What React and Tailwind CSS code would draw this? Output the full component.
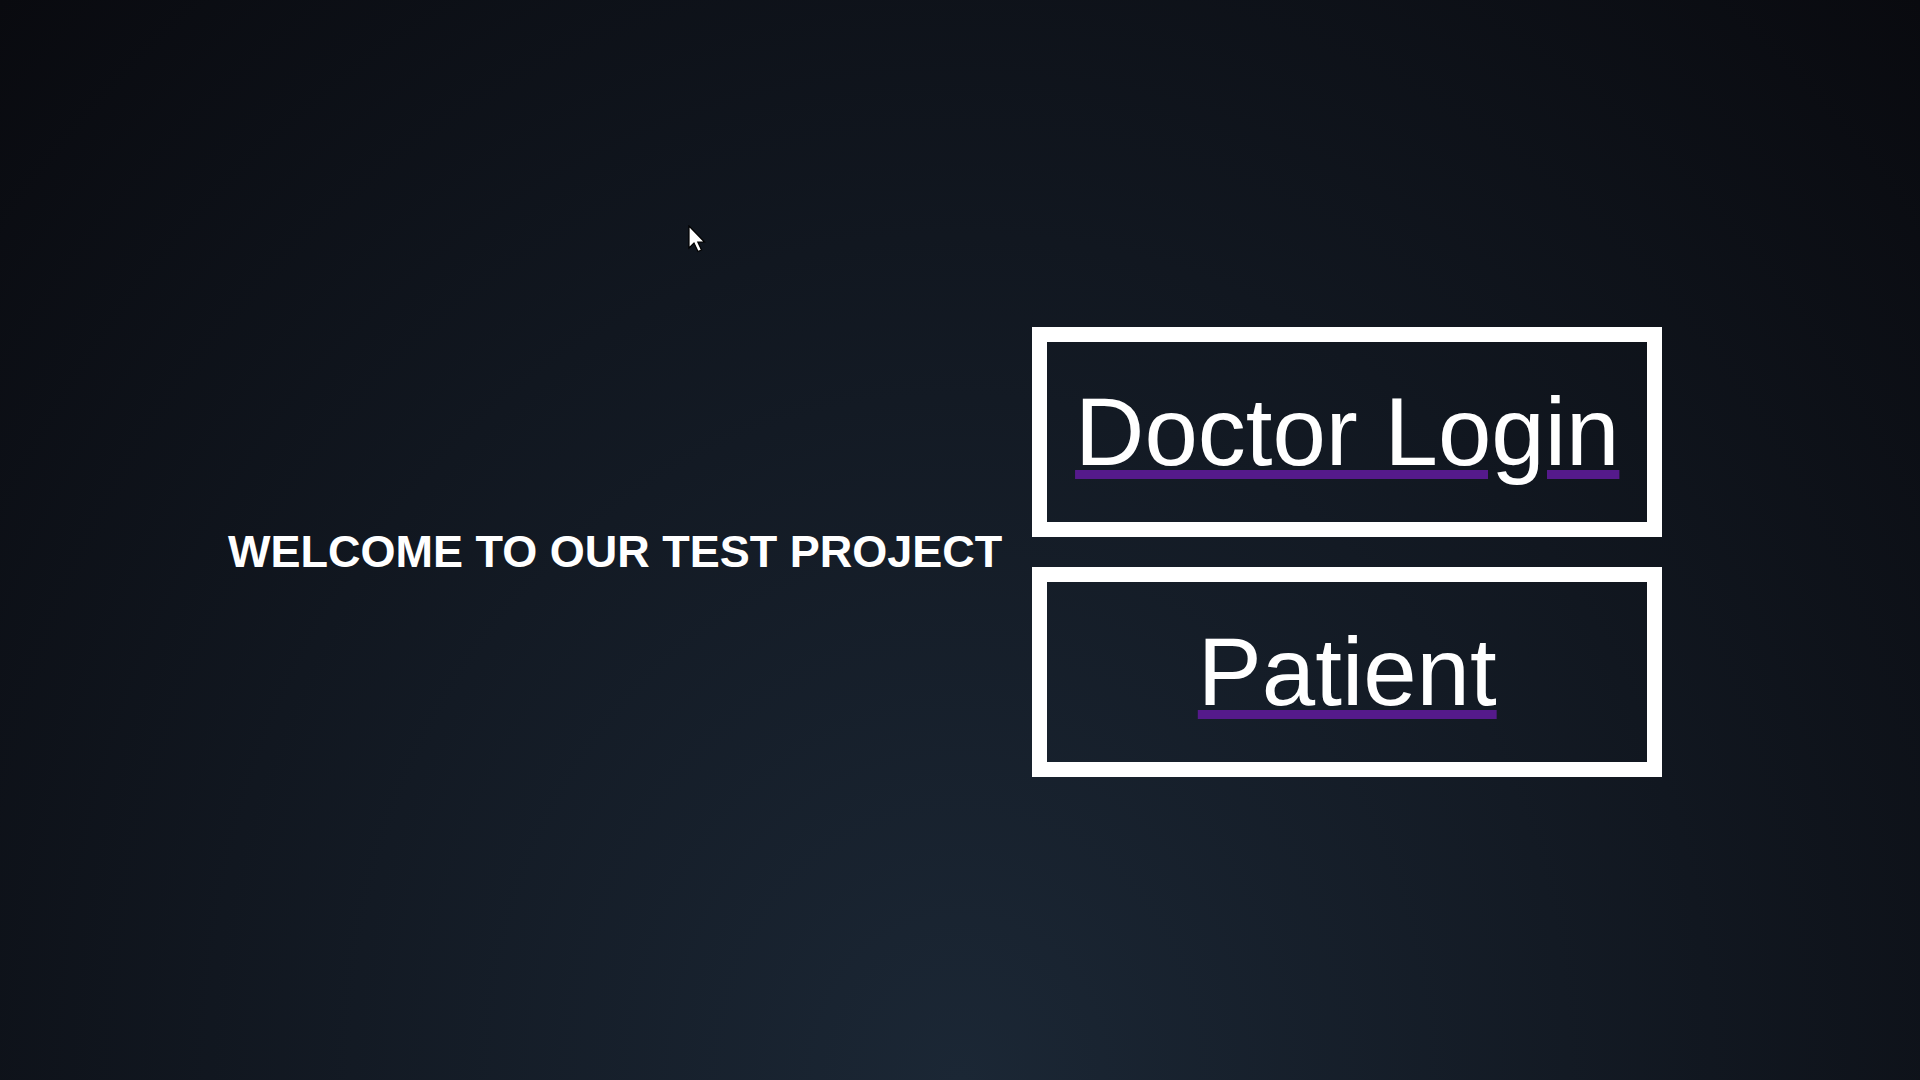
import React from "react";

const LinkBox = ({ label }) => (
  <a
    href="#"
    className="flex h-[210px] w-[630px] items-center justify-center border-[15px] border-white text-[96px] leading-[1.15] text-white underline decoration-[#551a8b]"
    style={{ fontFamily: '"Liberation Sans", Arial, sans-serif' }}
  >
    {label}
  </a>
);

const App = () => {
  return (
    <div className="relative h-screen w-full overflow-hidden bg-[radial-gradient(ellipse_at_bottom,#1b2735_0%,#090a0f_100%)]">
      {/* cursor from the screenshot */}
      <svg
        className="absolute left-[688px] top-[225px]"
        width="20"
        height="30"
        viewBox="0 0 20 30"
      >
        <path d="M1 1 L1 23 L6 18 L10 26.5 L13.5 25 L9.8 17 L16.5 17 Z" fill="#fff" stroke="#000" strokeWidth="1.2" />
      </svg>

      <div className="flex items-center gap-[30px] pl-[228px] pt-[327px]">
        <h1
          className="-mt-[2px] text-[45px] font-bold leading-none text-white"
          style={{ fontFamily: '"Liberation Sans", Arial, sans-serif' }}
        >
          WELCOME TO OUR TEST PROJECT
        </h1>
        <div className="flex flex-col gap-[30px]">
          <LinkBox label="Doctor Login" />
          <LinkBox label="Patient" />
        </div>
      </div>
    </div>
  );
};

export default App;
